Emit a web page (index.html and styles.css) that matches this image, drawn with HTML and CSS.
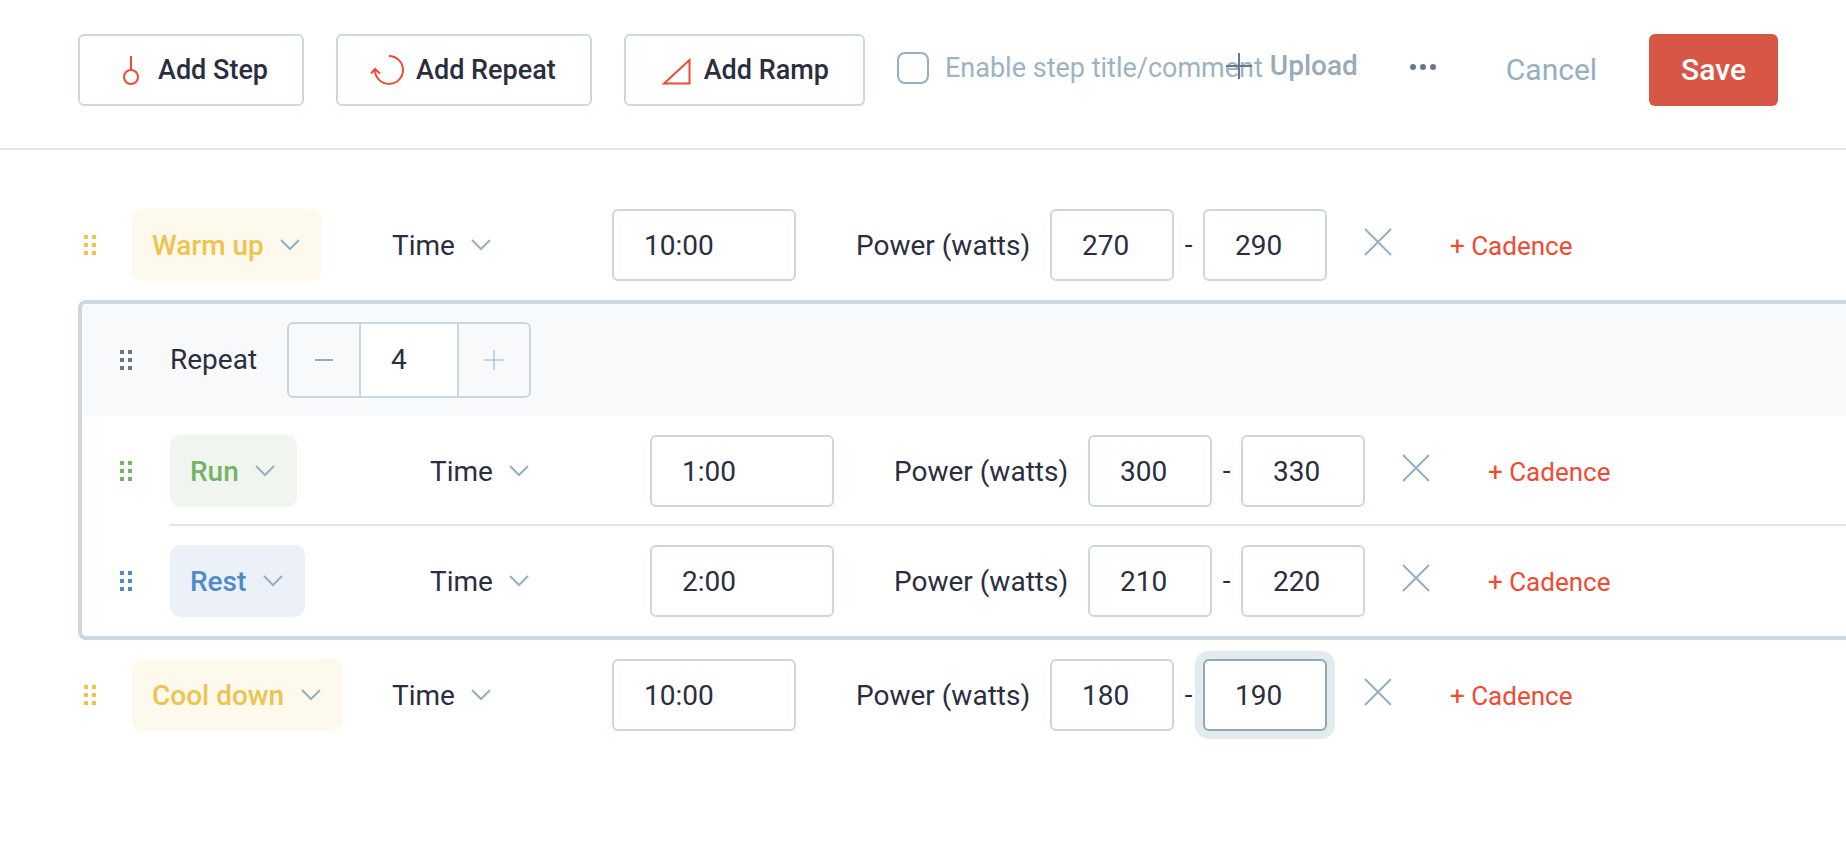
FILE: index.html
```html
<!DOCTYPE html>
<html lang="en">
<head>
    <meta charset="UTF-8">
    <meta name="viewport" content="width=device-width, initial-scale=1.0">
    <title>Workout Editor</title>
    <link rel="stylesheet" href="styles.css">
</head>
<body>
    <!-- shared icons -->
    <svg class="sprite" aria-hidden="true">
        <symbol id="icon-chevron" viewBox="0 0 20 12"><path d="M1 1l9 9 9-9"/></symbol>
        <symbol id="icon-close" viewBox="0 0 28 28"><path d="M1 1l26 26M27 1L1 27"/></symbol>
        <symbol id="icon-handle" viewBox="0 0 12 20"><path d="M0 0h4v4H0zM8 0h4v4H8zM0 8h4v4H0zM8 8h4v4H8zM0 16h4v4H0zM8 16h4v4H8z"/></symbol>
    </svg>

    <header class="toolbar">
        <div class="toolbar-left">
            <button class="add-btn" type="button">
                <svg width="36" height="32" viewBox="0 0 36 32"><path d="M19 2v14"/><circle cx="19" cy="23" r="7"/></svg>
                Add Step
            </button>
            <button class="add-btn" type="button">
                <svg width="36" height="32" viewBox="0 0 36 32"><path d="M19 2a14 14 0 1 1-14 14v-1M1 19.500l4-4.500 5 4.500"/></svg>
                Add Repeat
            </button>
            <button class="add-btn" type="button">
                <svg width="36" height="32" viewBox="0 0 36 32"><path d="M6 29.500h25.500V6z"/></svg>
                Add Ramp
            </button>
            <label class="enable">
                <input type="checkbox">
                Enable step title/comment
            </label>
        </div>
        <div class="toolbar-right">
            <button class="upload-btn" type="button">
                <svg width="26" height="26" viewBox="0 0 26 26"><path d="M13 0v26M0 13h26"/></svg>
                Upload
            </button>
            <button class="more-btn" type="button" aria-label="More">
                <svg width="26" height="6" viewBox="0 0 26 6"><circle cx="3" cy="3" r="3"/><circle cx="13" cy="3" r="3"/><circle cx="23" cy="3" r="3"/></svg>
            </button>
            <a class="cancel" href="#">Cancel</a>
            <button class="save-btn" type="button">Save</button>
        </div>
    </header>

    <main class="steps">
        <div class="step yellow">
            <svg class="handle"><use href="#icon-handle"/></svg>
            <div class="step-body">
                <div class="kind">
                    <select aria-label="Step type"><option>Warm up</option></select>
                    <svg class="chevron"><use href="#icon-chevron"/></svg>
                </div>
                <div class="duration">
                    <select aria-label="Duration type"><option>Time</option></select>
                    <svg class="chevron"><use href="#icon-chevron"/></svg>
                </div>
                <input class="time" type="text" value="10:00" aria-label="Duration">
                <label class="target" for="warmFrom">Power (watts)</label>
                <input class="watts" id="warmFrom" type="text" value="270">
                <span class="dash">-</span>
                <input class="watts" type="text" value="290" aria-label="Power to">
                <button class="remove" type="button" aria-label="Remove target"><svg><use href="#icon-close"/></svg></button>
                <a class="cadence" href="#">+ Cadence</a>
            </div>
        </div>

        <section class="repeat">
            <div class="repeat-head">
                <svg class="handle"><use href="#icon-handle"/></svg>
                <label for="repeatCount">Repeat</label>
                <div class="stepper">
                    <button type="button" aria-label="Less"><svg width="20" height="20" viewBox="0 0 20 20"><path d="M1 10h18" stroke-width="2"/></svg></button>
                    <input id="repeatCount" type="text" value="4">
                    <button type="button" aria-label="More"><svg width="20" height="20" viewBox="0 0 20 20"><path d="M10 0v20M0 10h20"/></svg></button>
                </div>
            </div>

            <div class="step green">
                <svg class="handle"><use href="#icon-handle"/></svg>
                <div class="step-body">
                    <div class="kind">
                        <select aria-label="Step type"><option>Run</option></select>
                        <svg class="chevron"><use href="#icon-chevron"/></svg>
                    </div>
                    <div class="duration">
                        <select aria-label="Duration type"><option>Time</option></select>
                        <svg class="chevron"><use href="#icon-chevron"/></svg>
                    </div>
                    <input class="time" type="text" value="1:00" aria-label="Duration">
                    <label class="target" for="runFrom">Power (watts)</label>
                    <input class="watts" id="runFrom" type="text" value="300">
                    <span class="dash">-</span>
                    <input class="watts" type="text" value="330" aria-label="Power to">
                    <button class="remove" type="button" aria-label="Remove target"><svg><use href="#icon-close"/></svg></button>
                    <a class="cadence" href="#">+ Cadence</a>
                </div>
            </div>

            <div class="step blue">
                <svg class="handle"><use href="#icon-handle"/></svg>
                <div class="step-body">
                    <div class="kind">
                        <select aria-label="Step type"><option>Rest</option></select>
                        <svg class="chevron"><use href="#icon-chevron"/></svg>
                    </div>
                    <div class="duration">
                        <select aria-label="Duration type"><option>Time</option></select>
                        <svg class="chevron"><use href="#icon-chevron"/></svg>
                    </div>
                    <input class="time" type="text" value="2:00" aria-label="Duration">
                    <label class="target" for="restFrom">Power (watts)</label>
                    <input class="watts" id="restFrom" type="text" value="210">
                    <span class="dash">-</span>
                    <input class="watts" type="text" value="220" aria-label="Power to">
                    <button class="remove" type="button" aria-label="Remove target"><svg><use href="#icon-close"/></svg></button>
                    <a class="cadence" href="#">+ Cadence</a>
                </div>
            </div>
        </section>

        <div class="step yellow">
            <svg class="handle"><use href="#icon-handle"/></svg>
            <div class="step-body">
                <div class="kind">
                    <select aria-label="Step type"><option>Cool down</option></select>
                    <svg class="chevron"><use href="#icon-chevron"/></svg>
                </div>
                <div class="duration">
                    <select aria-label="Duration type"><option>Time</option></select>
                    <svg class="chevron"><use href="#icon-chevron"/></svg>
                </div>
                <input class="time" type="text" value="10:00" aria-label="Duration">
                <label class="target" for="coolFrom">Power (watts)</label>
                <input class="watts" id="coolFrom" type="text" value="180">
                <span class="dash">-</span>
                <input class="watts active" type="text" value="190" aria-label="Power to">
                <button class="remove" type="button" aria-label="Remove target"><svg><use href="#icon-close"/></svg></button>
                <a class="cadence" href="#">+ Cadence</a>
            </div>
        </div>
    </main>
</body>
</html>
```
FILE: styles.css
```css
* {
    box-sizing: border-box;
}
body {
    margin: 0;
    font-family: Roboto, sans-serif;
    font-size: 28px;
    line-height: 36px;
    color: #2b2e3f;
    background-color: #fff;
    overflow-x: hidden;
}
button, input, select {
    font: inherit;
    color: inherit;
    margin: 0;
}
button {
    padding: 0;
    border: none;
    background: none;
    cursor: pointer;
}
a {
    text-decoration: none;
}
svg {
    flex: none;
    fill: none;
    stroke: #96afc1;
    stroke-width: 2;
}
.sprite {
    display: none;
}

/* toolbar */
.toolbar {
    display: flex;
    padding: 34px 68px 42px 78px;
    border-bottom: 2px solid #dfe6ec;
    white-space: nowrap;
}
.toolbar-left {
    display: flex;
    flex: 1;
    gap: 32px;
    min-width: 0;
}
.toolbar-right {
    display: flex;
    flex: none;
}
.add-btn {
    display: flex;
    flex: none;
    align-items: center;
    gap: 10px;
    height: 72px;
    padding: 0 34px 0 32px;
    border: 2px solid #cbd8e1;
    border-radius: 6px;
    font-size: 27px;
    font-weight: 500;
}
.add-btn svg {
    stroke: #f04b32;
}
.enable {
    display: flex;
    align-items: center;
    gap: 16px;
    height: 68px;
    font-size: 27px;
    color: #9db3c3;
}
.enable input {
    appearance: none;
    flex: none;
    width: 32px;
    height: 32px;
    border: 2px solid #96afc1;
    border-radius: 8px;
}
.upload-btn {
    display: flex;
    align-items: center;
    gap: 18px;
    height: 64px;
    font-weight: 500;
    color: #9aabb8;
}
.upload-btn svg {
    stroke: #6b7689;
}
.more-btn {
    display: flex;
    align-items: center;
    height: 66px;
    margin: 0 70px 0 52px;
}
.more-btn svg {
    fill: #6b7689;
    stroke: none;
}
.cancel {
    margin-right: 52px;
    font-size: 30px;
    line-height: 72px;
    color: #96afc1;
}
.save-btn {
    height: 72px;
    padding: 0 32px;
    border-radius: 6px;
    font-size: 30px;
    font-weight: 500;
    color: #fff;
    background-color: #d85645;
}

/* steps */
.steps {
    padding: 40px 0 40px 78px;
}
.step {
    display: flex;
    align-items: center;
}
.handle {
    width: 12px;
    height: 20px;
    margin: 0 36px 0 6px;
    fill: #6b7689;
    stroke: none;
}
.step-body {
    display: flex;
    flex: 1;
    align-items: center;
    height: 110px;
    white-space: nowrap;
}
select {
    appearance: none;
    height: 72px;
    border: none;
    border-radius: 10px;
    background-color: transparent;
}
.chevron {
    width: 20px;
    height: 12px;
    pointer-events: none;
}
.kind {
    display: flex;
    align-items: center;
    width: 254px;
}
.kind select {
    padding: 2px 58px 0 20px;
    font-weight: 500;
}
.kind .chevron {
    margin-left: -42px;
}
.duration {
    display: flex;
    align-items: center;
    width: 226px;
}
.duration select {
    padding: 2px 40px 0 6px;
}
.duration .chevron {
    margin-left: -24px;
}
.yellow .handle { fill: #eec34f; }
.yellow .kind select { color: #eec34f; background-color: #fdf9ec; }
.green .handle { fill: #73b564; }
.green .kind select { color: #73b564; background-color: #f0f5ef; }
.blue .handle { fill: #4f8bc9; }
.blue .kind select { color: #4f8bc9; background-color: #ecf1f9; }
.time, .watts {
    height: 72px;
    padding: 0 30px;
    border: 2px solid #cbd8e1;
    border-radius: 6px;
    background-color: #fff;
}
.time {
    width: 184px;
}
.watts {
    width: 124px;
}
.active {
    border-color: #92a7b6;
    box-shadow: 0 0 0 8px #e4ebef;
}
.target {
    width: 254px;
    padding: 2px 0 0 60px;
}
.dash {
    width: 29px;
    text-align: center;
}
.remove {
    display: flex;
    margin: 0 58px 6px 37px;
}
.remove svg {
    width: 28px;
    height: 28px;
}
.cadence {
    padding-top: 2px;
    font-size: 26px;
    color: #f04b32;
}

/* repeat block */
.repeat {
    border: 4px solid #cbd8e1;
    border-right: none;
    border-radius: 8px 0 0 8px;
    overflow: hidden;
}
.repeat-head {
    display: flex;
    align-items: center;
    height: 112px;
    background-color: #f7f9fb;
}
.repeat .handle {
    margin: 0 38px;
}
.green .step-body {
    padding-top: 2px;
    border-bottom: 2px solid #dfe6ec;
}
.stepper {
    display: flex;
    height: 76px;
    margin-left: 30px;
    border: 2px solid #cbd8e1;
    border-radius: 6px;
}
.stepper button {
    display: flex;
    align-items: center;
    justify-content: center;
    width: 70px;
}
.stepper svg {
    stroke-width: 1;
}
.stepper input {
    width: 100px;
    padding: 0 30px;
    border: solid #cbd8e1;
    border-width: 0 2px;
    background-color: #fff;
}
```
